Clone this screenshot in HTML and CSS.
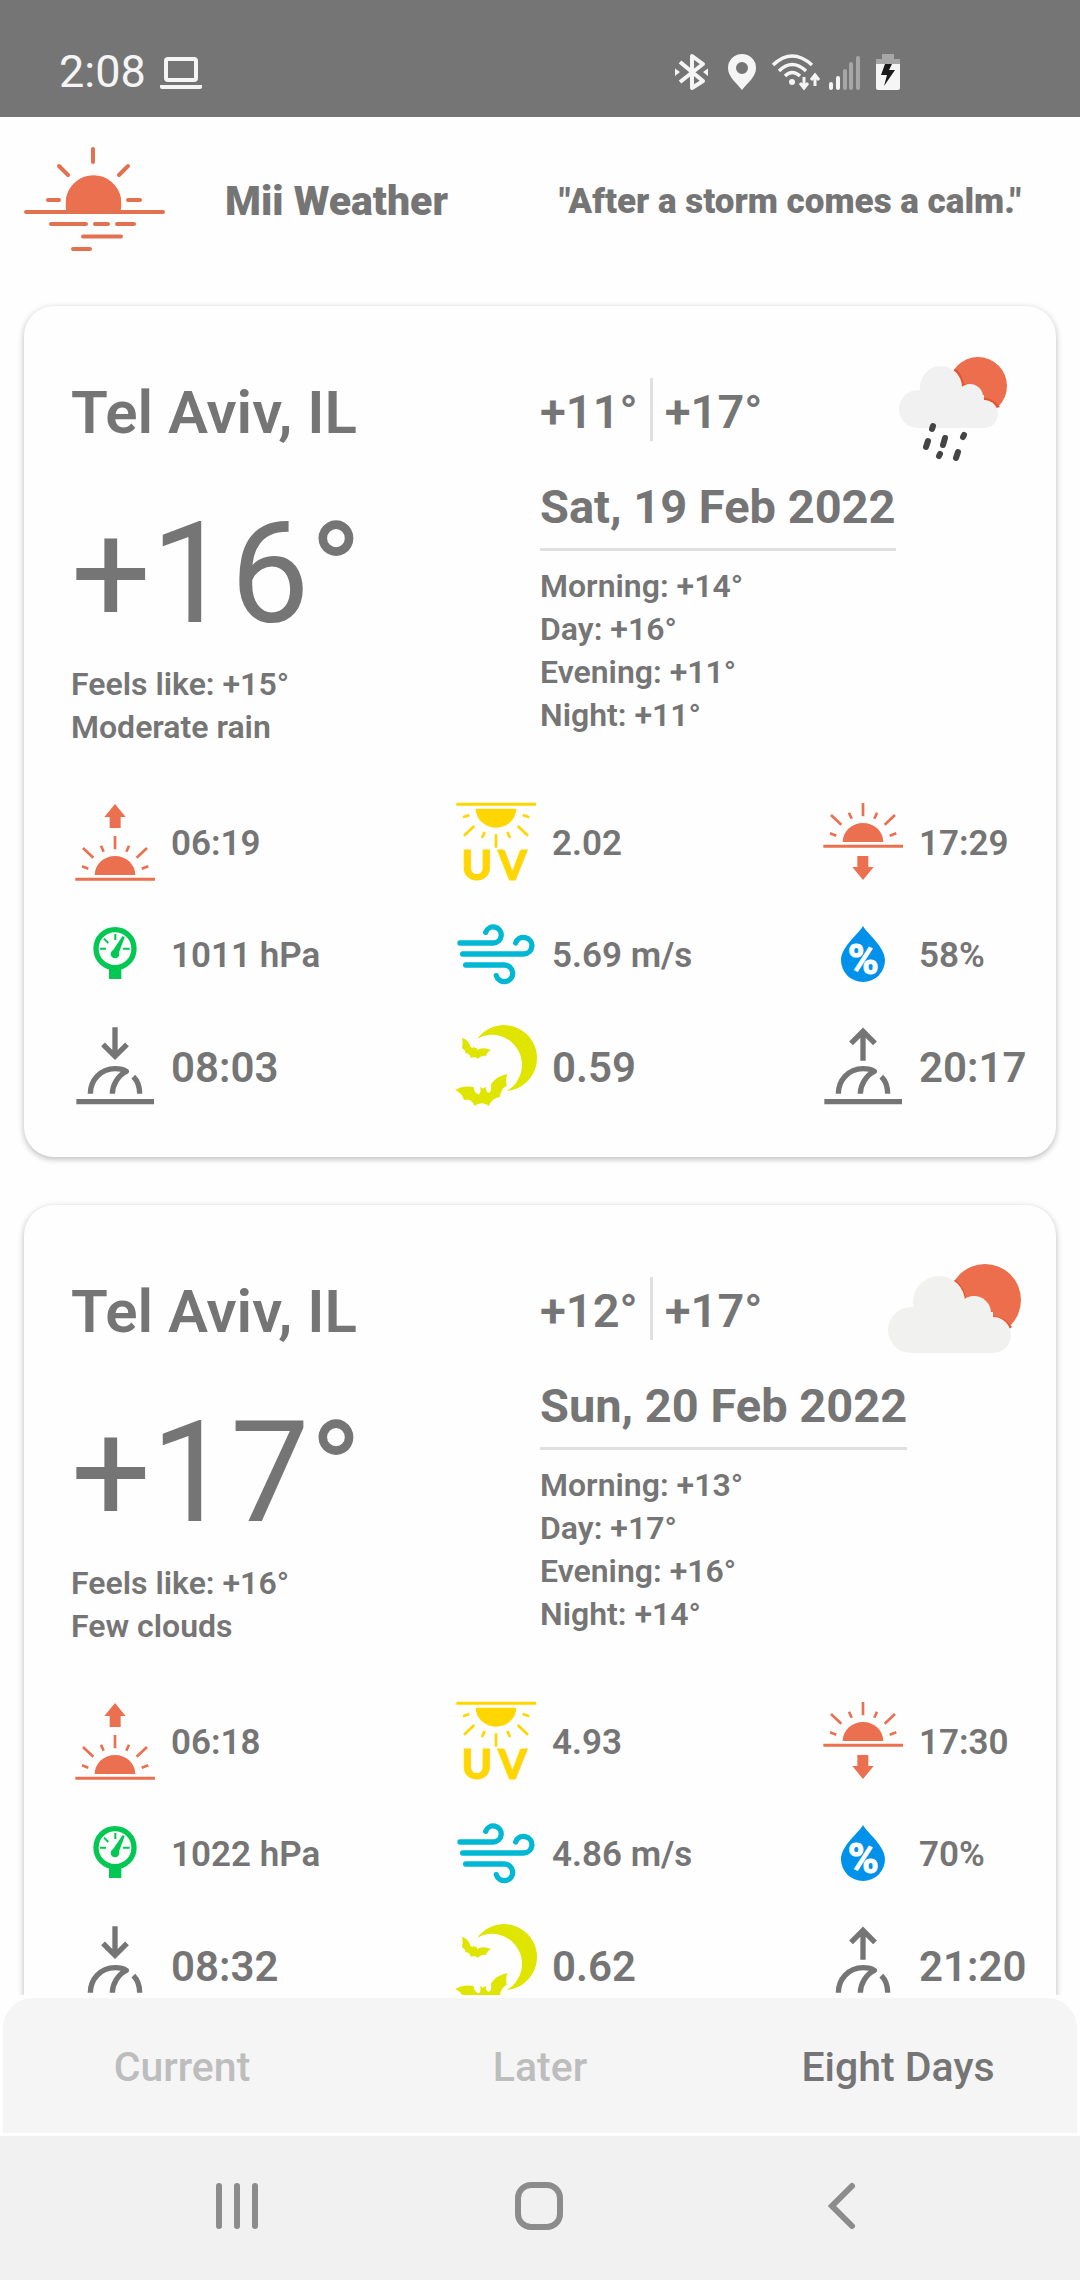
FILE: index.html
```html
<!DOCTYPE html>
<html lang="en">
<head>
<meta charset="utf-8">
<meta name="viewport" content="width=device-width, initial-scale=1">
<title>Mii Weather</title>
<link rel="stylesheet" href="styles.css">
</head>
<body>
<svg class="sprite" aria-hidden="true">
  <defs>
    <g id="rays">
      <path d="M195 168V208M99 204L130 233M291 204L260 233M153 197L161 215M237 197L229 215M96 259L115 266M295 259L275 266" fill="none" stroke="currentColor" stroke-width="8"/>
      <path d="M134 285A61 57 0 0 1 256 285Z" fill="currentColor"/>
      <path d="M76 298H315" stroke="currentColor" stroke-width="9"/>
    </g>
    <g id="moon-dome" fill="none" stroke="currentColor" stroke-width="16">
      <path d="M121 941C121 903 150 866 195 866C210 866 222 869 229 874C205 885 187 915 187 941" stroke-linejoin="round"/>
      <path d="M250 890C262 902 269 920 269 941M79 965H312"/>
    </g>
  </defs>
  <symbol id="sunrise" viewBox="60 57 270 270">
    <path d="M195 72L227 111H212V144H179V111H163Z" fill="currentColor"/>
    <use href="#rays"/>
  </symbol>
  <symbol id="sunset" viewBox="114 57 270 270">
    <use href="#rays" transform="translate(54 -99)"/>
    <path d="M249 300L281 261H265V228H232V261H217Z" fill="currentColor"/>
  </symbol>
  <symbol id="uv" viewBox="63 57 270 270">
    <use href="#rays" transform="translate(3 371) scale(1 -1)"/>
    <text class="uv-label" x="95 205" y="301">UV</text>
  </symbol>
  <symbol id="pressure" viewBox="60 393 270 270">
    <circle cx="195" cy="506" r="57" fill="none" stroke="currentColor" stroke-width="16"/>
    <path d="M177 562H214V597H177Z" fill="currentColor"/>
    <path d="M196 462V480M162 476L175 489M150 506H168M219 506H239" stroke="currentColor" stroke-width="6"/>
    <circle cx="195" cy="522" r="13" fill="currentColor"/>
    <path d="M187 514L218 468L224 472L206 520Z" fill="currentColor"/>
  </symbol>
  <symbol id="wind" viewBox="63 393 270 270">
    <path d="M90 489H190A24 24 0 1 0 167 457M98 522H281A25 25 0 1 0 257 489M107 555H222A25 25 0 1 1 199 587" fill="none" stroke="currentColor" stroke-width="16" stroke-linecap="round"/>
  </symbol>
  <symbol id="humidity" viewBox="114 393 270 270">
    <path d="M249 438C262 462 315 500 315 541A66 65 0 0 1 183 541C183 500 236 462 249 438Z" fill="currentColor"/>
    <text class="percent-label" x="250" y="581" text-anchor="middle">%</text>
  </symbol>
  <symbol id="moonset" viewBox="60 729 270 270">
    <path d="M195 742V828M159 793L195 829L231 793" fill="none" stroke="currentColor" stroke-width="16"/>
    <use href="#moon-dome"/>
  </symbol>
  <symbol id="moonrise" viewBox="114 729 270 270">
    <path d="M249 842V756M213 790L249 754L285 790" fill="none" stroke="currentColor" stroke-width="16"/>
    <use href="#moon-dome" x="54"/>
  </symbol>
  <symbol id="moon" viewBox="63 729 270 270">
    <g fill="currentColor">
      <path d="M142 776A99 99 0 1 1 230 933A89 89 0 0 0 142 776Z"/>
      <path d="M96 773Q117 780 121 800L128 805L131 800L135 804L140 803L141 810Q158 800 183 810Q170 817 168 828Q156 824 143 836Q136 829 122 833Q119 820 107 820Q106 810 96 805Q100 790 96 773Z"/>
      <path d="M76 930Q100 916 130 921Q134 940 146 943Q153 942 151 920L159 926L167 920Q168 938 177 938Q186 934 183 913Q200 888 232 882Q226 898 230 917Q211 928 210 951Q185 955 177 977Q157 962 133 977Q126 955 102 960Q98 942 76 930Z"/>
    </g>
  </symbol>
  <symbol id="rain" viewBox="886 340 138 138">
    <circle cx="978" cy="386" r="29" fill="#ec6e4c"/>
    <g fill="#e5532f">
      <path d="M956 369Q963 376 964 384Q978 382 984 398Q993 398 1000 407L996 408H950V372Z"/>
    </g>
    <g fill="#f1f1f1">
      <circle cx="918" cy="409" r="19"/>
      <circle cx="941" cy="387" r="21"/>
      <circle cx="970" cy="397" r="13"/>
      <circle cx="984" cy="414" r="14"/>
      <path d="M918 395H984V428H918Z"/>
    </g>
    <path d="M933 426L932 429M928 441L926 447M945 438L943 445M964 435L963 437M940 454L939 456M958 452L956 458" stroke="#444" stroke-width="6" stroke-linecap="round"/>
  </symbol>
  <symbol id="clouds" viewBox="886 1239 138 138">
    <circle cx="985" cy="1300" r="36" fill="#ec6e4c"/>
    <path d="M956 1280Q964 1288 966 1298Q986 1294 990 1316Q1004 1316 1012 1327L1008 1330H950V1282Z" fill="#e5532f"/>
    <g fill="#f1f1ef">
      <circle cx="911" cy="1330" r="23"/>
      <circle cx="939" cy="1302" r="26"/>
      <circle cx="974" cy="1313" r="17"/>
      <circle cx="993" cy="1335" r="18"/>
      <path d="M911 1312H993V1353H911Z"/>
    </g>
  </symbol>
</svg>

<div class="screen">
  <div class="status-bar">
    <span class="clock">2:08</span>
    <svg class="status-laptop" viewBox="160 52 42 38" aria-hidden="true">
      <rect x="166" y="58" width="30" height="21" rx="2" fill="none" stroke="#f5f5f5" stroke-width="4"/>
      <path d="M160 84H202V86Q202 88 200 88H162Q160 88 160 86Z" fill="#f5f5f5"/>
    </svg>
    <div class="status-icons" aria-hidden="true">
      <svg width="41" height="38" viewBox="673 52 41 38">
        <path d="M680 61L703 80L692 87V55L703 63L680 81" fill="none" stroke="#f5f5f5" stroke-width="4" stroke-linejoin="round"/>
        <path d="M675 67.500L680 71L675 75ZM708 67.500L703 71L708 75Z" fill="#f5f5f5"/>
      </svg>
      <svg width="42" height="38" viewBox="722 52 42 38">
        <path fill-rule="evenodd" d="M742 89C736 81 728 76 728 67A14 14 0 0 1 756 67C756 76 748 81 742 89ZM742 61A6 6 0 1 0 742 73A6 6 0 1 0 742 61Z" fill="#f5f5f5"/>
      </svg>
      <svg width="49" height="38" viewBox="772 52 49 38">
        <path d="M773 64Q792 46 812 64M779 70Q792 57 806 70M785 75Q792 68 800 75" fill="none" stroke="#f5f5f5" stroke-width="3.500"/>
        <circle cx="792" cy="81" r="3" fill="#f5f5f5"/>
        <path d="M804 76V87M800 82L804 87L808 82M815 85V75M811 79L815 74L819 79" fill="none" stroke="#f5f5f5" stroke-width="3"/>
      </svg>
      <svg width="31" height="38" viewBox="829 52 31 38">
        <path d="M831 83V87M838 77V87" stroke="#f5f5f5" stroke-width="4" stroke-linecap="round"/>
        <path d="M845 70V87M851 63V87M858 57V87" stroke="#a6a6a6" stroke-width="4" stroke-linecap="round"/>
      </svg>
      <svg width="40" height="38" viewBox="868 52 40 38">
        <path d="M882 53H894V58H900V63H876V58H882Z" fill="#a6a6a6"/>
        <path d="M876 63H900V87Q900 89 898 89H878Q876 89 876 87Z" fill="#f5f5f5"/>
        <path d="M885 63H892L889 69H895L884 85L887 74H881Z" fill="#1a1a1a"/>
      </svg>
    </div>
  </div>

  <header class="app-header">
    <svg class="logo" viewBox="24 147 141 108" role="img" aria-label="Sunset">
      <path d="M67 212C65 208 66 204 66 198A28 28 0 0 1 121 198C121 204 122 208 120 212Z" fill="#ea704f"/>
      <path d="M93 149V162M59 166L68 175M128 166L119 175M48 200H59M128 200H140M26 212H163M51 224H86M95 224H108M117 224H134M83 236.500H121M73 249H90" fill="none" stroke="#e2714f" stroke-width="4" stroke-linecap="round"/>
    </svg>
    <h1 class="app-name">Mii Weather</h1>
    <p class="quote">"After a storm comes a calm."</p>
  </header>

  <main class="forecast">
    <article class="card">
      <div class="summary">
        <div class="now">
          <h2 class="place">Tel Aviv, IL</h2>
          <p class="temperature">+16°</p>
          <p class="detail">Feels like: +15°</p>
          <p class="detail">Moderate rain</p>
        </div>
        <div class="day">
          <div class="range-row">
            <p class="range"><span class="low">+11°</span><span class="high">+17°</span></p>
            <svg class="weather-icon" role="img" aria-label="Rain"><use href="#rain"/></svg>
          </div>
          <h3 class="date">Sat, 19 Feb 2022</h3>
          <p class="detail">Morning: +14°</p>
          <p class="detail">Day: +16°</p>
          <p class="detail">Evening: +11°</p>
          <p class="detail">Night: +11°</p>
        </div>
      </div>
      <ul class="metrics">
        <li class="metric"><svg class="icon orange" role="img" aria-label="Sunrise"><use href="#sunrise"/></svg>06:19</li>
        <li class="metric"><svg class="icon yellow" role="img" aria-label="UV index"><use href="#uv"/></svg>2.02</li>
        <li class="metric"><svg class="icon orange" role="img" aria-label="Sunset"><use href="#sunset"/></svg>17:29</li>
        <li class="metric"><svg class="icon green" role="img" aria-label="Pressure"><use href="#pressure"/></svg>1011 hPa</li>
        <li class="metric"><svg class="icon cyan" role="img" aria-label="Wind"><use href="#wind"/></svg>5.69 m/s</li>
        <li class="metric"><svg class="icon blue" role="img" aria-label="Humidity"><use href="#humidity"/></svg>58%</li>
        <li class="metric large"><svg class="icon" role="img" aria-label="Moonset"><use href="#moonset"/></svg>08:03</li>
        <li class="metric large"><svg class="icon lime" role="img" aria-label="Moon phase"><use href="#moon"/></svg>0.59</li>
        <li class="metric large"><svg class="icon" role="img" aria-label="Moonrise"><use href="#moonrise"/></svg>20:17</li>
      </ul>
    </article>

    <article class="card">
      <div class="summary">
        <div class="now">
          <h2 class="place">Tel Aviv, IL</h2>
          <p class="temperature">+17°</p>
          <p class="detail">Feels like: +16°</p>
          <p class="detail">Few clouds</p>
        </div>
        <div class="day">
          <div class="range-row">
            <p class="range"><span class="low">+12°</span><span class="high">+17°</span></p>
            <svg class="weather-icon" role="img" aria-label="Few clouds"><use href="#clouds"/></svg>
          </div>
          <h3 class="date">Sun, 20 Feb 2022</h3>
          <p class="detail">Morning: +13°</p>
          <p class="detail">Day: +17°</p>
          <p class="detail">Evening: +16°</p>
          <p class="detail">Night: +14°</p>
        </div>
      </div>
      <ul class="metrics">
        <li class="metric"><svg class="icon orange" role="img" aria-label="Sunrise"><use href="#sunrise"/></svg>06:18</li>
        <li class="metric"><svg class="icon yellow" role="img" aria-label="UV index"><use href="#uv"/></svg>4.93</li>
        <li class="metric"><svg class="icon orange" role="img" aria-label="Sunset"><use href="#sunset"/></svg>17:30</li>
        <li class="metric"><svg class="icon green" role="img" aria-label="Pressure"><use href="#pressure"/></svg>1022 hPa</li>
        <li class="metric"><svg class="icon cyan" role="img" aria-label="Wind"><use href="#wind"/></svg>4.86 m/s</li>
        <li class="metric"><svg class="icon blue" role="img" aria-label="Humidity"><use href="#humidity"/></svg>70%</li>
        <li class="metric large"><svg class="icon" role="img" aria-label="Moonset"><use href="#moonset"/></svg>08:32</li>
        <li class="metric large"><svg class="icon lime" role="img" aria-label="Moon phase"><use href="#moon"/></svg>0.62</li>
        <li class="metric large"><svg class="icon" role="img" aria-label="Moonrise"><use href="#moonrise"/></svg>21:20</li>
      </ul>
    </article>
  </main>

  <nav class="tabs">
    <button class="tab" type="button">Current</button>
    <button class="tab" type="button">Later</button>
    <button class="tab active" type="button" aria-current="page">Eight Days</button>
  </nav>

  <div class="system-nav">
    <button class="system-button" type="button" aria-label="Recent apps">
      <svg width="50" height="50" viewBox="0 0 50 50" fill="none" stroke="#8c8c8c" stroke-width="6" stroke-linecap="round"><path d="M6 5V45M24 5V45M42 5V45"/></svg>
    </button>
    <button class="system-button" type="button" aria-label="Home">
      <svg width="50" height="50" viewBox="0 0 50 50" fill="none" stroke="#8c8c8c" stroke-width="6"><rect x="3" y="4" width="42" height="42" rx="13"/></svg>
    </button>
    <button class="system-button" type="button" aria-label="Back">
      <svg width="50" height="50" viewBox="0 0 50 50" fill="none" stroke="#8c8c8c" stroke-width="6" stroke-linecap="round"><path d="M35 5L15 25L35 45"/></svg>
    </button>
  </div>
</div>
</body>
</html>
```
FILE: styles.css
```css
* {
  box-sizing: border-box;
}

body,
h1,
h2,
h3,
p,
ul {
  margin: 0;
  padding: 0;
}

body {
  background: #fefefe;
  color: #757575;
  font-family: Roboto, "Liberation Sans", sans-serif;
}

svg {
  display: block;
  flex: none;
}

button {
  border: 0;
  padding: 0;
  background: none;
  font-family: inherit;
}

.sprite {
  display: none;
}

.screen {
  display: flex;
  flex-direction: column;
  height: 100vh;
}

.status-bar {
  display: flex;
  align-items: center;
  flex: none;
  gap: 14px;
  padding: 53px 172px 26px 59px;
  background: #757575;
}

.clock {
  color: #f5f5f5;
  font-size: 45px;
  line-height: 38px;
}

.status-laptop {
  width: 42px;
  height: 38px;
}

.status-icons {
  display: flex;
  gap: 8px;
  margin-left: auto;
}

.app-header {
  display: flex;
  align-items: center;
  flex: none;
  height: 168px;
  padding: 0 59px 0 24px;
}

.logo {
  width: 141px;
  height: 108px;
}

.app-name {
  margin-left: 60px;
  font-size: 41px;
  font-weight: 900;
  line-height: 48px;
}

.quote {
  margin-left: auto;
  font-size: 35px;
  font-weight: 900;
  line-height: 41px;
}

.forecast {
  display: flex;
  flex-direction: column;
  flex: 1;
  gap: 48px;
  min-height: 0;
  padding: 21px 24px 0;
  overflow: hidden;
}

.card {
  flex: none;
  padding: 34px 23px 33px 47px;
  border-radius: 30px;
  background: #fefefe;
  box-shadow: 0 2px 6px rgba(0, 0, 0, 0.28);
}

.summary {
  display: grid;
  grid-template-columns: 469fr 493fr;
  margin-bottom: 39px;
}

.now {
  padding-top: 38px;
}

.place {
  font-size: 60px;
  font-weight: 600;
  line-height: 70px;
}

.temperature {
  margin: 43px 0 7px;
  font-size: 141px;
  line-height: 165px;
}

.detail {
  font-size: 32px;
  font-weight: 600;
  line-height: 43px;
}

.range-row {
  display: flex;
  align-items: center;
  justify-content: space-between;
  padding-right: 9px;
}

.range {
  display: flex;
  height: 63px;
  font-size: 47px;
  font-weight: 600;
  line-height: 68px;
}

.low {
  padding-right: 12px;
  border-right: 3px solid #e0e0e0;
}

.high {
  padding-left: 12px;
}

.weather-icon {
  width: 138px;
  height: 138px;
}

.date {
  width: fit-content;
  margin-bottom: 14px;
  padding-bottom: 12px;
  border-bottom: 3px solid #e0e0e0;
  font-size: 47px;
  font-weight: 700;
  line-height: 58px;
}

.metrics {
  display: grid;
  grid-template-columns: 381fr 367fr 214fr;
  list-style: none;
}

.metric {
  display: flex;
  align-items: center;
  gap: 11px;
  height: 112px;
  font-size: 35px;
  font-weight: 600;
  line-height: 42px;
  white-space: nowrap;
}

.metric.large {
  font-size: 42px;
}

.icon {
  width: 90px;
  height: 90px;
  margin-left: -1px;
}

.orange {
  color: #ea704f;
}

.yellow {
  color: #ffd600;
}

.green {
  color: #00c853;
}

.cyan {
  color: #00b8d4;
}

.blue {
  color: #0091ea;
}

.lime {
  color: #e0e500;
}

.uv-label {
  fill: currentColor;
  stroke: currentColor;
  stroke-width: 3px;
  font-family: Lato, sans-serif;
  font-size: 123px;
  font-weight: 900;
}

.percent-label {
  fill: #ffffff;
  stroke: #ffffff;
  stroke-width: 3px;
  font-family: Roboto, sans-serif;
  font-size: 126px;
  font-weight: 700;
}

.tabs {
  display: flex;
  flex: none;
  height: 141px;
  padding: 3px;
}

.tab {
  flex: 1;
  padding-top: 3px;
  background: #f5f5f5;
  color: #bdbdbd;
  font-size: 41px;
  font-weight: 500;
}

.tab:first-child {
  border-top-left-radius: 30px;
}

.tab:last-child {
  border-top-right-radius: 30px;
}

.tab.active {
  color: #757575;
}

.system-nav {
  display: flex;
  flex: none;
  height: 144px;
  padding: 0 8% 4px;
  background: #f1f1f1;
}

.system-button {
  display: flex;
  align-items: center;
  justify-content: center;
  flex: 1;
}
```
